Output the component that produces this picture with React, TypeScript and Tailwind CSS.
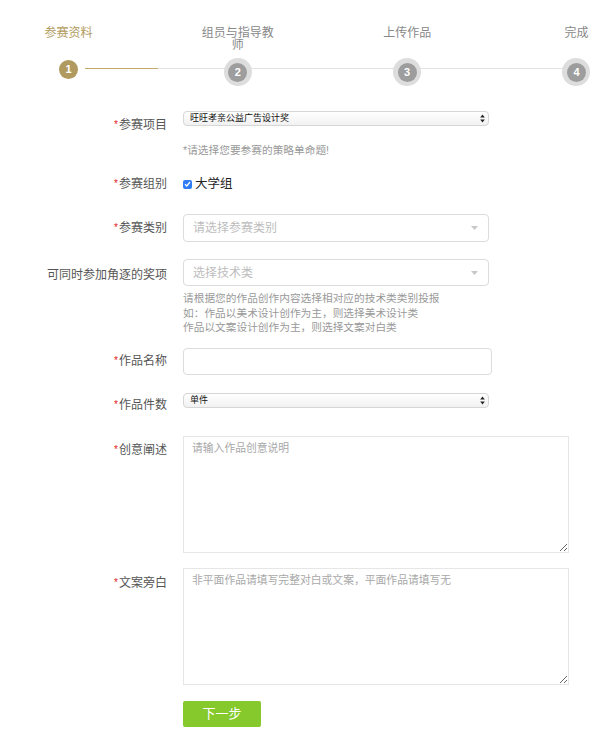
import React from "react";

const steps = ["参赛资料", "组员与指导教师", "上传作品", "完成"];

function Req() {
    return <span className="text-[#e02020] text-[10px] align-[1px] mr-px">*</span>;
}

function NativeSelect({ value }: { value: string }) {
    return (
        <div className="relative w-[306px] h-[15px] rounded-[4px] border border-[#d6d6d6] bg-gradient-to-b from-white to-[#f1f1f1] pl-[6px] text-[9px] leading-[13px] text-[#111]">
            {value}
            <svg className="absolute right-[3px] top-[2px]" width="5" height="9" viewBox="0 0 5 9">
                <path d="M2.5 0.5 L4.8 3.6 L0.2 3.6 Z" fill="#222" />
                <path d="M2.5 8.5 L4.8 5.4 L0.2 5.4 Z" fill="#222" />
            </svg>
        </div>
    );
}

function FancySelect({ placeholder, h }: { placeholder: string; h: string }) {
    return (
        <div className={`relative w-[306px] ${h} rounded-[4px] border border-[#dcdcdc] bg-white pl-[9px] flex items-center text-[12px] text-[#bdbdbd]`}>
            {placeholder}
            <svg className="absolute right-[10px] top-1/2 -translate-y-1/2" width="7" height="4" viewBox="0 0 7 4">
                <path d="M0 0 L7 0 L3.5 4 Z" fill="#c8c8c8" />
            </svg>
        </div>
    );
}

export default function App() {
    return (
        <div className="w-[615px] bg-white font-['Liberation_Sans','Noto_Sans_CJK_SC',sans-serif] pb-[6px]">
            {/* Stepper */}
            <div className="pl-[30px]">
                <div className="flex justify-between pt-[27px] h-[58px]">
                    {steps.map((s, i) => (
                        <div
                            key={s}
                            className={`w-[77px] text-center text-[12px] leading-[12px] ${i === 0 ? "text-[#b19c60]" : "text-[#888888]"}`}
                        >
                            {s}
                        </div>
                    ))}
                </div>
                <div className="relative flex justify-between h-[30px]">
                    <div className="absolute left-[55px] w-[491px] top-[10px] h-px bg-[#e2e2e2]" />
                    <div className="absolute left-[55px] w-[73px] top-[10px] h-px bg-[#c2aa6b]" />
                    {steps.map((s, i) =>
                        i === 0 ? (
                            <div key={s} className="relative w-[77px] flex justify-center pt-[2px]">
                                <div className="w-[19px] h-[19px] rounded-full bg-[#b19a5f] text-white text-[11px] font-bold flex items-center justify-center">
                                    1
                                </div>
                            </div>
                        ) : (
                            <div key={s} className="relative w-[77px] flex justify-center">
                                <div className="w-[28px] h-[28px] rounded-full bg-[#dddddd] p-[4.5px]">
                                    <div className="w-full h-full rounded-full bg-[#9d9d9d] text-white text-[11px] font-bold flex items-center justify-center">
                                        {i + 1}
                                    </div>
                                </div>
                            </div>
                        )
                    )}
                </div>
            </div>

            {/* Form */}
            <div className="mt-[23px] text-[12px] leading-[12px] text-[#555555]">
                {/* 参赛项目 */}
                <div className="flex items-start">
                    <div className="w-[167px] shrink-0 text-right pt-[8px]"><Req />参赛项目</div>
                    <div className="ml-[16px]">
                        <NativeSelect value="旺旺孝亲公益广告设计奖" />
                        <div className="mt-[17px] text-[10.7px] leading-[14px] text-[#999999]">*请选择您要参赛的策略单命题!</div>
                    </div>
                </div>

                {/* 参赛组别 */}
                <div className="flex items-center mt-[19px] h-[16px]">
                    <div className="w-[167px] shrink-0 text-right"><Req />参赛组别</div>
                    <div className="ml-[16px] flex items-center">
                        <div className="w-[9px] h-[9px] rounded-[2px] bg-[#2f7cf6] flex items-center justify-center">
                            <svg width="7" height="6" viewBox="0 0 7 6">
                                <path d="M1 3.2 L2.8 5 L6 1" stroke="white" strokeWidth="1.3" fill="none" />
                            </svg>
                        </div>
                        <span className="ml-[3px] text-[12.5px] text-[#222222]">大学组</span>
                    </div>
                </div>

                {/* 参赛类别 */}
                <div className="flex items-center mt-[22px]">
                    <div className="w-[167px] shrink-0 text-right"><Req />参赛类别</div>
                    <div className="ml-[16px]">
                        <FancySelect placeholder="请选择参赛类别" h="h-[28px]" />
                    </div>
                </div>

                {/* 可同时参加角逐的奖项 */}
                <div className="flex items-start mt-[17px]">
                    <div className="w-[167px] shrink-0 text-right pt-[10px]">可同时参加角逐的奖项</div>
                    <div className="ml-[16px]">
                        <FancySelect placeholder="选择技术类" h="h-[27px]" />
                        <div className="mt-[5px] text-[10.7px] leading-[14.5px] text-[#999999]">
                            <div>请根据您的作品创作内容选择相对应的技术类类别投报</div>
                            <div>如：作品以美术设计创作为主，则选择美术设计类</div>
                            <div>作品以文案设计创作为主，则选择文案对白类</div>
                        </div>
                    </div>
                </div>

                {/* 作品名称 */}
                <div className="flex items-center mt-[13px]">
                    <div className="w-[167px] shrink-0 text-right"><Req />作品名称</div>
                    <div className="ml-[16px] w-[309px] h-[27px] rounded-[4px] border border-[#dcdcdc] bg-white" />
                </div>

                {/* 作品件数 */}
                <div className="flex items-start mt-[18px]">
                    <div className="w-[167px] shrink-0 text-right pt-[6px]"><Req />作品件数</div>
                    <div className="ml-[16px]">
                        <NativeSelect value="单件" />
                    </div>
                </div>

                {/* 创意阐述 */}
                <div className="flex items-start mt-[25px]">
                    <div className="w-[167px] shrink-0 text-right pt-[8px]"><Req />创意阐述</div>
                    <textarea
                        className="ml-[16px] block w-[386px] h-[117px] border-[1.5px] border-[#e6e6e6] px-[8px] pt-[5px] text-[10.8px] leading-[12px] outline-none placeholder:text-[#a8a8a8]"
                        placeholder="请输入作品创意说明"
                    />
                </div>

                {/* 文案旁白 */}
                <div className="flex items-start mt-[15px]">
                    <div className="w-[167px] shrink-0 text-right pt-[9px]"><Req />文案旁白</div>
                    <textarea
                        className="ml-[16px] block w-[386px] h-[117px] border-[1.5px] border-[#e6e6e6] px-[8px] pt-[5px] text-[10.8px] leading-[12px] outline-none placeholder:text-[#a8a8a8]"
                        placeholder="非平面作品请填写完整对白或文案，平面作品请填写无"
                    />
                </div>

                <div className="mt-[16px] pl-[183px]">
                    <button className="w-[78px] h-[26px] rounded-[2px] bg-[#85c92d] text-white text-[13px]">下一步</button>
                </div>
            </div>
        </div>
    );
}
